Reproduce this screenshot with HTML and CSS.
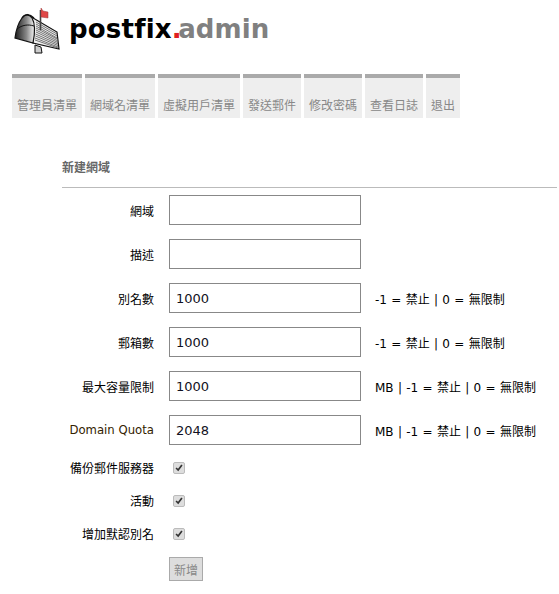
FILE: index.html
```html
<!DOCTYPE html>
<html lang="zh-Hant">
<head>
    <meta charset="UTF-8">
    <meta name="viewport" content="width=device-width, initial-scale=1.0">
    <title>Postfix Admin</title>
    <link rel="stylesheet" href="styles.css">
</head>
<body>

    <div class="logo">
        <svg class="logo-icon" width="48" height="50" viewBox="0 0 48 50" aria-hidden="true">
            <defs>
                <linearGradient id="door" x1="0" y1="0" x2="1" y2="0">
                    <stop offset="0" stop-color="#1a1a1a"/>
                    <stop offset="0.6" stop-color="#8a8a8a"/>
                    <stop offset="1" stop-color="#f4f4f4"/>
                </linearGradient>
            </defs>
            <path d="M14 10 L43 27 L45 44 L19 38 Z" fill="#eee" stroke="#111" stroke-width="1.2"/>
            <path d="M22 17 L43 29 M22 19 L43 31 M22 21 L43 33 M22 23 L44 34.5 M22 25 L44 36 M22 27 L44 37.5 M21.5 29 L44 39 M21.5 31 L44 40.5 M21 33 L44 42 M21 35 L44 43" stroke="#555" stroke-width="0.8" fill="none"/>
            <path d="M1 33 C2 25 5 17 8 13 C11 9 15 9 18 13 C21 18 21 28 19 38 Z" fill="url(#door)" stroke="#111" stroke-width="1.2"/>
            <path d="M3 24 C8 20 14 19 20 21" stroke="#111" stroke-width="1" fill="none"/>
            <path d="M8 13 C11 8 16 9 20 13" stroke="#111" stroke-width="1.2" fill="none"/>
            <path d="M26.5 5 V25" stroke="#444" stroke-width="1.6"/>
            <path d="M27 3 L29 6 L34 7 L34 13 L27 12 Z" fill="#e04848" stroke="#9a3a3a" stroke-width="0.5"/>
            <path d="M21 40 L21 48 H28 L27 42 Z" fill="#ccc" stroke="#111" stroke-width="1"/>
        </svg>
        <span class="logo-text">postfix<span class="logo-dot">.</span><span class="logo-admin">admin</span></span>
    </div>

    <ul class="menu">
        <li><a href="#">管理員清單</a></li>
        <li><a href="#">網域名清單</a></li>
        <li><a href="#">虛擬用戶清單</a></li>
        <li><a href="#">發送郵件</a></li>
        <li><a href="#">修改密碼</a></li>
        <li><a href="#">查看日誌</a></li>
        <li><a href="#">退出</a></li>
    </ul>

    <form class="form-box">
        <h3 class="form-title">新建網域</h3>

        <div class="row">
            <label class="row-label">網域</label>
            <input class="text-input" type="text">
        </div>
        <div class="row">
            <label class="row-label">描述</label>
            <input class="text-input" type="text">
        </div>
        <div class="row">
            <label class="row-label">別名數</label>
            <input class="text-input" type="text" value="1000">
            <span class="row-note">-1 = 禁止 | 0 = 無限制</span>
        </div>
        <div class="row">
            <label class="row-label">郵箱數</label>
            <input class="text-input" type="text" value="1000">
            <span class="row-note">-1 = 禁止 | 0 = 無限制</span>
        </div>
        <div class="row">
            <label class="row-label">最大容量限制</label>
            <input class="text-input" type="text" value="1000">
            <span class="row-note">MB | -1 = 禁止 | 0 = 無限制</span>
        </div>
        <div class="row row-last">
            <label class="row-label latin">Domain Quota</label>
            <input class="text-input" type="text" value="2048">
            <span class="row-note">MB | -1 = 禁止 | 0 = 無限制</span>
        </div>

        <div class="check-row">
            <label class="row-label">備份郵件服務器</label>
            <input class="check" type="checkbox" checked>
        </div>
        <div class="check-row">
            <label class="row-label">活動</label>
            <input class="check" type="checkbox" checked>
        </div>
        <div class="check-row">
            <label class="row-label">增加默認別名</label>
            <input class="check" type="checkbox" checked>
        </div>

        <button class="submit-btn" type="button">新增</button>
    </form>

</body>
</html>
```

FILE: styles.css
```css
body {
    font-family: "DejaVu Sans", "Noto Sans CJK TC", sans-serif;
    font-size: 12px;
    color: black;
    background-color: white;
    margin: 0;
    overflow: hidden;
}

.logo {
    display: flex;
    align-items: flex-start;
    height: 74px;
    padding-left: 14px;
}

.logo-icon {
    margin-top: 5px;
}

.logo-text {
    margin-left: 7px;
    margin-top: 12px;
    font-size: 26px;
    font-weight: bold;
    line-height: 34px;
    letter-spacing: 0.2px;
    color: black;
}

.logo-dot {
    color: #e02020;
    letter-spacing: -3.5px;
}

.logo-admin {
    color: #808080;
    letter-spacing: 0.1px;
}

.menu {
    display: flex;
    gap: 3px;
    list-style: none;
    margin: 0;
    padding: 0 0 0 12px;
}

.menu li {
    background-color: #eee;
    border-top: 4px solid #aaa;
    height: 40px;
}

.menu a {
    display: block;
    padding: 20px 5px 0;
    line-height: 16px;
    color: #888;
    text-decoration: none;
}

.form-box {
    margin: 42px 2px 0 62px;
}

.form-title {
    font-size: 12px;
    font-weight: bold;
    color: #666;
    line-height: 16px;
    margin: 0 0 7px;
    padding: 0 0 11px;
    border-bottom: 1px solid #bbb;
}

.row {
    display: flex;
    align-items: center;
    height: 30px;
    margin-bottom: 14px;
}

.row-last {
    margin-bottom: 6px;
}

.row-label {
    width: 92px;
    margin-right: 15px;
    text-align: right;
    flex-shrink: 0;
}

.latin {
    font-size: 11.7px;
    color: #332200;
    white-space: nowrap;
}

.text-input {
    width: 192px;
    height: 30px;
    box-sizing: border-box;
    border: 1px solid #888;
    padding: 0 6px;
    margin: 0;
    font-family: inherit;
    font-size: 13px;
    color: #112;
    outline: none;
}

.row-note {
    margin-left: 14px;
    font-size: 12px;
    word-spacing: 0.5px;
    white-space: nowrap;
}

.check-row {
    display: flex;
    align-items: center;
    height: 33px;
}

.check {
    appearance: none;
    width: 12px;
    height: 12px;
    margin: 0 0 0 4px;
    box-sizing: border-box;
    border: 1px solid #bbb;
    border-radius: 2px;
    background: #ddd url("data:image/svg+xml,%3Csvg xmlns='http://www.w3.org/2000/svg' viewBox='0 0 12 12'%3E%3Cpath d='M2.5 6 L5 8.5 L9.5 2.5' fill='none' stroke='%23333' stroke-width='2'/%3E%3C/svg%3E") center no-repeat;
}

.submit-btn {
    display: block;
    margin: 7px 0 0 107px;
    width: 34px;
    height: 24px;
    padding: 0;
    font-family: inherit;
    font-size: 12px;
    color: #888;
    background-color: #ddd;
    border: 1px solid #aaa;
}
```
